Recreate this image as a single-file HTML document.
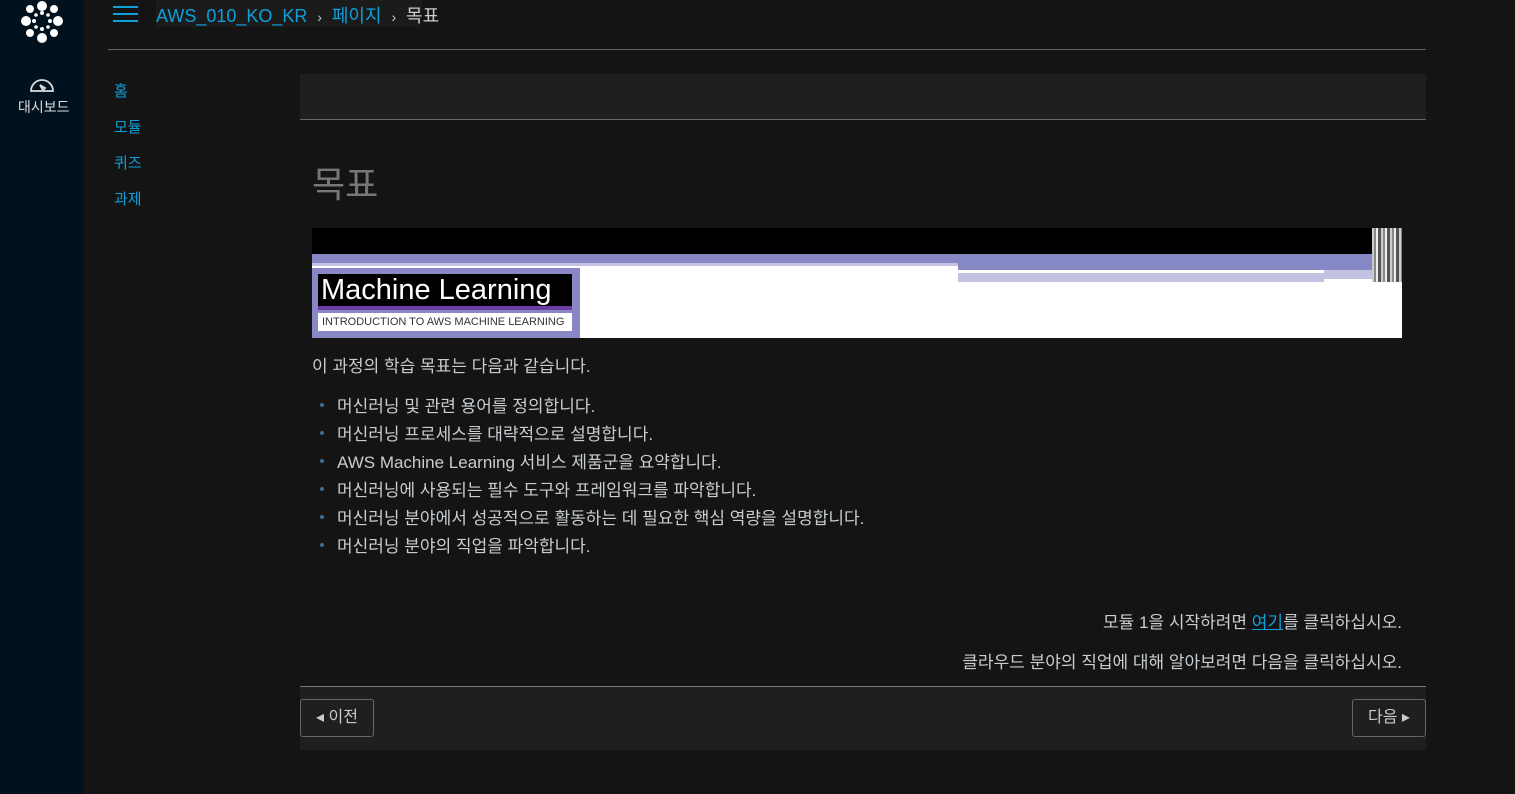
<!DOCTYPE html>
<html><head><meta charset="utf-8"><style>
*{margin:0;padding:0;box-sizing:border-box}
body{width:1515px;height:794px;background:#141414;font-family:"Liberation Sans","Noto Sans CJK KR",sans-serif;color:#c7cdd1;position:relative;overflow:hidden}
.nav{position:absolute;left:0;top:0;width:84px;height:794px;background:#01111d}
.a{position:absolute;white-space:nowrap}
.blue{color:#0ea0db}
.hr{position:absolute;height:1px;background:#666}
li{list-style:none;position:absolute;left:337px;font-size:17px;color:#c7cdd1;white-space:nowrap}
li:before{content:"";position:absolute;left:-17px;top:11px;width:4px;height:4px;border-radius:2px;background:#3b6d8c}
.btn{position:absolute;top:699px;height:38px;border:1px solid #666;border-radius:3px;font-size:16px;color:#c7cdd1;line-height:36px;text-align:center}
</style></head><body>
<div class="nav">
<svg class="a" style="left:20px;top:0" width="44" height="44" viewBox="0 0 44 44" fill="#fff">
<circle cx="22" cy="6" r="5"/><circle cx="22" cy="38" r="5"/><circle cx="6" cy="21" r="5"/><circle cx="38" cy="21" r="5"/>
<circle cx="10" cy="9" r="4"/><circle cx="34" cy="9" r="4"/><circle cx="10" cy="33" r="4"/><circle cx="34" cy="33" r="4"/>
<circle cx="22" cy="13" r="2"/><circle cx="22" cy="29" r="2"/><circle cx="14" cy="21" r="2"/><circle cx="30" cy="21" r="2"/>
<circle cx="16" cy="15" r="1.8"/><circle cx="28" cy="15" r="1.8"/><circle cx="16" cy="27" r="1.8"/><circle cx="28" cy="27" r="1.8"/></svg>
<svg class="a" style="left:28px;top:73px" width="28" height="20" viewBox="0 0 28 20" fill="none" stroke="#ddd" stroke-width="1.8"><path d="M3 18 A11 11 0 1 1 25 18 Z"/><path d="M12 12 L15 17 L17 15 Z"/></svg>
<div class="a" style="left:18px;top:97px;font-size:14px;color:#ddd">대시보드</div>
</div>
<svg class="a" style="left:113px;top:6px" width="26" height="18"><rect y="0" width="25" height="2" fill="#0ea0db"/><rect y="7" width="25" height="2" fill="#0ea0db"/><rect y="14" width="25" height="2" fill="#0ea0db"/></svg>
<div class="a" style="left:156px;top:0;height:27px;width:266px;background:#1b1b1b"></div>
<div class="a" style="left:156px;top:2px;font-size:18px"><span class="blue">AWS_010_KO_KR</span><span style="font-size:14px;margin:0 6px"> › </span><span class="blue">페이지</span><span style="font-size:14px;margin:0 6px"> › </span><span>목표</span></div>
<div class="hr" style="left:108px;top:49px;width:1318px"></div>
<div class="a blue" style="left:114px;top:80px;font-size:15px">홈</div>
<div class="a blue" style="left:114px;top:116px;font-size:15px">모듈</div>
<div class="a blue" style="left:114px;top:152px;font-size:15px">퀴즈</div>
<div class="a blue" style="left:114px;top:188px;font-size:15px">과제</div>
<div class="a" style="left:300px;top:74px;width:1126px;height:46px;background:#1f1f1f;border-bottom:1px solid #666"></div>
<div class="a" style="left:312px;top:156px;font-size:36px;color:#777">목표</div>
<div class="a" style="left:312px;top:228px;width:1090px;height:110px;background:#fff;overflow:hidden">
<div class="a" style="left:0;top:0;width:1090px;height:26px;background:#000"></div>
<div class="a" style="left:0;top:26px;width:1090px;height:9px;background:#8588c5"></div>
<div class="a" style="left:0;top:35px;width:646px;height:3px;background:#c3c2e2"></div>
<div class="a" style="left:646px;top:35px;width:444px;height:7px;background:#8588c5"></div>
<div class="a" style="left:646px;top:45px;width:366px;height:9px;background:#c3c2e2"></div>
<div class="a" style="left:646px;top:42px;width:366px;height:3px;background:#fff"></div>
<div class="a" style="left:1012px;top:42px;width:78px;height:9px;background:#c3c2e2"></div>
<div class="a" style="left:1060px;top:0;width:30px;height:54px;background:repeating-linear-gradient(90deg,#ccc 0 2px,#888 2px 4px,#eee 4px 6px,#555 6px 9px)"></div>
<div class="a" style="left:0;top:40px;width:268px;height:70px;background:#8a87c6"></div>
<div class="a" style="left:6px;top:46px;width:254px;height:32px;background:#000;color:#fff;font-size:29px;line-height:32px;padding-left:3px">Machine Learning</div>
<div class="a" style="left:6px;top:78px;width:254px;height:4px;background:#6a3ea0"></div>
<div class="a" style="left:6px;top:85px;width:254px;height:18px;background:#fff;color:#333;font-size:11px;line-height:18px;padding-left:4px">INTRODUCTION TO AWS MACHINE LEARNING</div>
</div>
<div class="a" style="left:312px;top:352px;font-size:17px">이 과정의 학습 목표는 다음과 같습니다.</div>
<ul>
<li style="top:392px">머신러닝 및 관련 용어를 정의합니다.</li>
<li style="top:420px">머신러닝 프로세스를 대략적으로 설명합니다.</li>
<li style="top:448px">AWS Machine Learning 서비스 제품군을 요약합니다.</li>
<li style="top:476px">머신러닝에 사용되는 필수 도구와 프레임워크를 파악합니다.</li>
<li style="top:504px">머신러닝 분야에서 성공적으로 활동하는 데 필요한 핵심 역량을 설명합니다.</li>
<li style="top:532px">머신러닝 분야의 직업을 파악합니다.</li>
</ul>
<div class="a" style="right:113px;top:608px;font-size:17px">모듈 1을 시작하려면 <span class="blue" style="text-decoration:underline">여기</span>를 클릭하십시오.</div>
<div class="a" style="right:113px;top:648px;font-size:17px">클라우드 분야의 직업에 대해 알아보려면 다음을 클릭하십시오.</div>
<div class="a" style="left:300px;top:686px;width:1126px;height:64px;background:#1f1f1f;border-top:1px solid #777"></div>
<div class="btn" style="left:300px;width:74px">◂ 이전</div>
<div class="btn" style="left:1352px;width:74px">다음 ▸</div>
</body></html>
